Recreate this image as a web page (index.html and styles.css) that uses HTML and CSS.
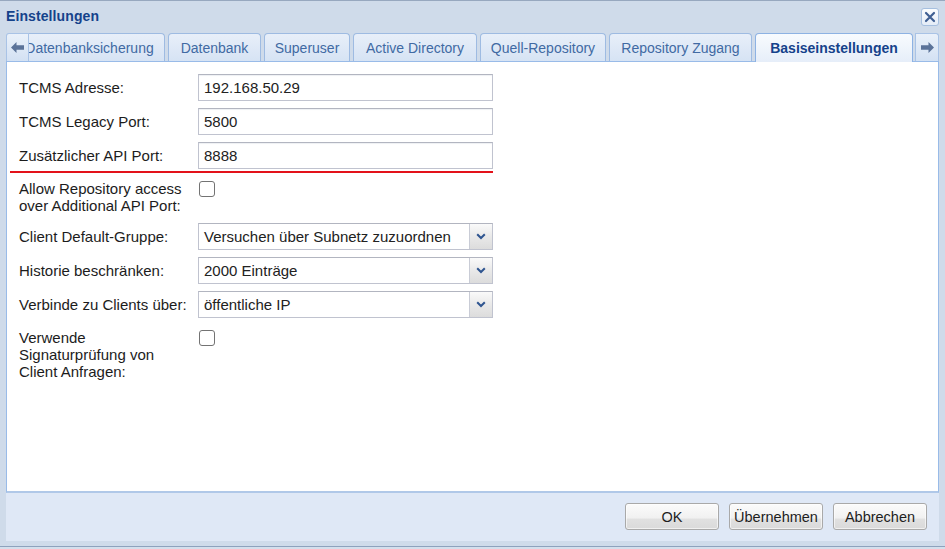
FILE: index.html
```html
<!DOCTYPE html>
<html lang="de">
<head>
<meta charset="utf-8">
<title>Einstellungen</title>
<link rel="stylesheet" href="styles.css">
</head>
<body>
<div class="window">
  <div class="header">
    <span class="title">Einstellungen</span>
    <button class="close" type="button" aria-label="Schließen">
      <svg width="12" height="12" viewBox="0 0 12 12"><path d="M2 2 L10 10 M10 2 L2 10" stroke="#3f5f93" stroke-width="2.2" stroke-linecap="round"/></svg>
    </button>
  </div>
  <div class="tabbar">
    <div class="scroller scroller-left">
      <svg width="13" height="11" viewBox="0 0 13 11"><path d="M0 5.5 L5.5 0 L5.5 3.3 L13 3.3 L13 7.7 L5.5 7.7 L5.5 11 Z" fill="#5b7399"/></svg>
    </div>
    <div class="tab-viewport">
      <ul class="tabs">
        <li class="tab tab-1">Datenbanksicherung</li>
        <li class="tab tab-2">Datenbank</li>
        <li class="tab tab-3">Superuser</li>
        <li class="tab tab-4">Active Directory</li>
        <li class="tab tab-5">Quell-Repository</li>
        <li class="tab tab-6">Repository Zugang</li>
        <li class="tab tab-7 active">Basiseinstellungen</li>
      </ul>
    </div>
    <div class="scroller scroller-right">
      <svg width="13" height="11" viewBox="0 0 13 11"><path d="M13 5.5 L7.5 0 L7.5 3.3 L0 3.3 L0 7.7 L7.5 7.7 L7.5 11 Z" fill="#5b7399"/></svg>
    </div>
  </div>
  <div class="body">
    <form class="form">
      <div class="row">
        <label class="label">TCMS Adresse:</label>
        <div class="field"><span class="input">192.168.50.29</span></div>
      </div>
      <div class="row">
        <label class="label">TCMS Legacy Port:</label>
        <div class="field"><span class="input">5800</span></div>
      </div>
      <div class="row">
        <label class="label">Zusätzlicher API Port:</label>
        <div class="field"><span class="input">8888</span></div>
      </div>
      <div class="mark"></div>
      <div class="row row-check row-check-1">
        <label class="label">Allow Repository access over Additional API Port:</label>
        <div class="field"><span class="checkbox"></span></div>
      </div>
      <div class="row row-combo-first">
        <label class="label">Client Default-Gruppe:</label>
        <div class="field combo"><span class="combo-text">Versuchen über Subnetz zuzuordnen</span><span class="trigger"><svg width="10" height="7" viewBox="0 0 10 7"><path d="M1.2 1.2 L5 5 L8.8 1.2" fill="none" stroke="#2f5590" stroke-width="2"/></svg></span></div>
      </div>
      <div class="row">
        <label class="label">Historie beschränken:</label>
        <div class="field combo"><span class="combo-text">2000 Einträge</span><span class="trigger"><svg width="10" height="7" viewBox="0 0 10 7"><path d="M1.2 1.2 L5 5 L8.8 1.2" fill="none" stroke="#2f5590" stroke-width="2"/></svg></span></div>
      </div>
      <div class="row">
        <label class="label">Verbinde zu Clients über:</label>
        <div class="field combo"><span class="combo-text">öffentliche IP</span><span class="trigger"><svg width="10" height="7" viewBox="0 0 10 7"><path d="M1.2 1.2 L5 5 L8.8 1.2" fill="none" stroke="#2f5590" stroke-width="2"/></svg></span></div>
      </div>
      <div class="row row-check row-check-2">
        <label class="label">Verwende Signaturprüfung von Client Anfragen:</label>
        <div class="field"><span class="checkbox"></span></div>
      </div>
    </form>
  </div>
  <div class="footer">
    <button class="btn" type="button">OK</button>
    <button class="btn" type="button">Übernehmen</button>
    <button class="btn" type="button">Abbrechen</button>
  </div>
</div>
</body>
</html>
```
FILE: styles.css
```css
* { box-sizing: border-box; }
html { background: #d4dfec; }
body {
  margin: 0;
  font-family: "Liberation Sans", Arial, sans-serif;
  color: #1c1c1c;
}
.window {
  height: 547px;
  display: flex;
  flex-direction: column;
  background: #cfdbea;
  border-top: 1px solid #97a8bf;
  border-bottom: 1px solid #8ea2bd;
  padding: 0 6px 5px 6px;
}
.header {
  height: 30px;
  display: flex;
  align-items: center;
  justify-content: space-between;
}
.title {
  font-weight: bold;
  font-size: 14px;
  color: #15428b;
  letter-spacing: 0.1px;
}
.close {
  width: 18px;
  height: 18px;
  padding: 0;
  margin-top: 1px;
  border: 1px solid #a6bfdf;
  border-radius: 3px;
  background: linear-gradient(#fbfdff, #e4ecf7);
  display: flex;
  align-items: center;
  justify-content: center;
}
.tabbar {
  height: 31px;
  display: flex;
  align-items: flex-end;
  border-bottom: 1px solid #99bbe8;
}
.scroller {
  height: 28px;
  display: flex;
  align-items: center;
  justify-content: center;
  background: linear-gradient(#eaf1fa, #d3e1f3);
  border: 1px solid #a9c3e6;
  border-bottom: none;
}
.scroller-left { width: 23px; border-radius: 3px 0 0 0; }
.scroller-right { width: 24px; margin-left: 2px; border-radius: 0 3px 0 0; }
.tab-viewport {
  flex: 1;
  overflow: hidden;
  height: 29px;
  margin-bottom: -1px;
}
.tabs {
  list-style: none;
  margin: 0 0 0 -15px;
  padding: 0;
  display: flex;
  align-items: flex-end;
  gap: 3px;
  height: 29px;
}
.tab {
  flex: none;
  height: 28px;
  margin-bottom: 1px;
  display: flex;
  align-items: center;
  justify-content: center;
  font-size: 14px;
  color: #416aa3;
  background: linear-gradient(#e8eff9, #d6e3f4);
  border: 1px solid #9ebbe2;
  border-bottom: none;
  border-radius: 4px 4px 0 0;
  white-space: nowrap;
}
.tab.active {
  height: 29px;
  margin-bottom: 0;
  font-weight: bold;
  color: #15428b;
  background: linear-gradient(#f8fbfe, #e6eef9);
  border-color: #8db2e3;
}
.tab-1 { width: 151px; }
.tab-2 { width: 93px; }
.tab-3 { width: 86px; }
.tab-4 { width: 124px; }
.tab-5 { width: 126px; }
.tab-6 { width: 143px; }
.tab-7 { width: 158px; }
.body {
  flex: 1;
  background: #fff;
  border: 1px solid #99bbe8;
  border-top: none;
  border-bottom: 2px solid #b0c8e8;
}
.form {
  padding: 12px 0 0 12px;
}
.row {
  display: flex;
  align-items: center;
  margin-top: 7px;
}
.row:first-child { margin-top: 0; }
.label {
  width: 179px;
  flex: none;
  font-size: 15px;
  line-height: 17px;
  color: #1c1c1c;
  padding-right: 8px;
}
.field {
  width: 295px;
  flex: none;
}
.input {
  display: flex;
  align-items: center;
  height: 27px;
  padding-left: 5px;
  border: 1px solid #c0c3cf;
  border-top-color: #b2b5c0;
  background: #fff;
  box-shadow: inset 0 1px 1px #eef0f3;
  font-size: 15px;
  color: #222;
}
.mark {
  height: 2px;
  width: 483px;
  margin: 2px 0 0 -9px;
  background: #e3121a;
}
.row-check { align-items: flex-start; }
.row-check-1 { margin-top: 7px; }
.row-check-2 { margin-top: 11px; }
.checkbox {
  display: block;
  width: 16px;
  height: 16px;
  margin: 1px 0 0 1px;
  border: 1.5px solid #737373;
  border-radius: 3px;
  background: #fff;
}
.row-combo-first { margin-top: 9px; }
.combo {
  display: flex;
  height: 27px;
  border: 1px solid #c0c3cf;
  border-top-color: #b2b5c0;
  background: #fff;
}
.combo-text {
  flex: 1;
  display: flex;
  align-items: center;
  padding-left: 5px;
  font-size: 15px;
  color: #222;
  white-space: nowrap;
}
.trigger {
  width: 23px;
  flex: none;
  display: flex;
  align-items: center;
  justify-content: center;
  border-left: 1px solid #c9ccd6;
  background: linear-gradient(#fafafa, #e9e9e9 50%, #dcdcdc);
}
.footer {
  height: 48px;
  display: flex;
  justify-content: flex-end;
  align-items: flex-start;
  gap: 10px;
  padding: 10px 12px 0 0;
  background: #dfe8f6;
}
.btn {
  width: 94px;
  height: 27px;
  padding: 0;
  font-family: "Liberation Sans", Arial, sans-serif;
  font-size: 14.5px;
  color: #1e1e1e;
  border: 1px solid #a9a9a9;
  border-radius: 3px;
  background: linear-gradient(#fbfbfb 0%, #f1f1f1 55%, #e0e0e0 62%, #dadada 100%);
  box-shadow: inset 0 0 0 1px rgba(255,255,255,0.6);
}
```
